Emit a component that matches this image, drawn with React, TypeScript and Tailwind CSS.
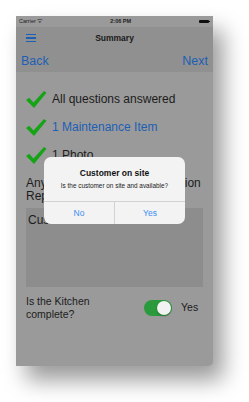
import React from "react";

function Check() {
  return (
    <svg width="22" height="19" viewBox="0 0 22 19" className="shrink-0">
      <path d="M1 10 L4.2 7.8 L8.5 12.5 L19 1 L21.5 2.8 L9 18 Z" fill="#16a316" />
    </svg>
  );
}

function CheckRow({ label, blue }: { label: string; blue?: boolean }) {
  return (
    <div className="flex h-[28px] items-center gap-[5px] pl-[9px]">
      <Check />
      <span className={`text-[12px] leading-none ${blue ? "text-[#1d5fb5]" : "text-[#1c1c1c]"}`}>{label}</span>
    </div>
  );
}

export default function App() {
  return (
    <div
      className="h-[402px] w-[249px] bg-white pl-[16px] pt-[16px]"
      style={{ fontFamily: '"Liberation Sans", Arial, sans-serif' }}
    >
      <div className="relative h-[350px] w-[197px] rounded-br-[5px] bg-[#9a9a9a] shadow-[10px_14px_22px_rgba(0,0,0,0.4)]">
        {/* Status bar */}
        <div className="flex h-[11px] items-center justify-between px-[3px] text-[5.5px] text-[#222]">
          <span>Carrier ᯤ</span>
          <span className="font-bold">2:06 PM</span>
          <span className="flex items-center">
            <span className="h-[3px] w-[10px] rounded-[1px] bg-[#111]" />
            <span className="h-[1.5px] w-[1px] bg-[#111]" />
          </span>
        </div>

        {/* Nav */}
        <div className="h-[45px] bg-[#909090]">
          <div className="relative flex h-[22px] items-center">
            <div className="ml-[10px] flex w-[10px] flex-col gap-[2px]">
              <span className="h-[1.5px] bg-[#1d5fb5]" />
              <span className="h-[1.5px] bg-[#1d5fb5]" />
              <span className="h-[1.5px] bg-[#1d5fb5]" />
            </div>
            <span className="flex-1 pr-[20px] text-center text-[8.5px] font-bold text-[#1a1a1a]">Summary</span>
          </div>
          <div className="flex h-[23px] items-center justify-between px-[5px] pt-[1px] text-[12.5px] text-[#1d5fb5]">
            <span>Back</span>
            <span>Next</span>
          </div>
        </div>

        {/* Content */}
        <div className="pt-[13px]">
          <CheckRow label="All questions answered" />
          <CheckRow label="1 Maintenance Item" blue />
          <CheckRow label="1 Photo" />
          <p className="mt-[8px] px-[10px] text-[12px] leading-[13px] text-[#1c1c1c]">
            Any comments for the Inspection Report?
          </p>
          <div className="mx-[10px] mt-[5px] h-[79px] bg-[#8d8d8d] px-[2px] pt-[3px] text-[12px] text-[#1c1c1c]">
            Customer comments
          </div>
          <div className="mt-[8px] flex items-center px-[10px]">
            <p className="w-[118px] text-[10.5px] leading-[13px] text-[#1c1c1c]">
              Is the Kitchen
              <br />
              complete?
            </p>
            <div className="flex h-[16px] w-[28px] items-center justify-end rounded-full bg-[#2b9a3c] pr-[1px]">
              <span className="h-[14px] w-[14px] rounded-full bg-[#f2f2f2] shadow-[0_1px_2px_rgba(0,0,0,0.3)]" />
            </div>
            <span className="ml-[9px] text-[10.5px] text-[#1c1c1c]">Yes</span>
          </div>
        </div>

        {/* Alert */}
        <div className="absolute left-[28px] top-[141px] flex h-[67px] w-[141px] flex-col overflow-hidden rounded-[7px] bg-[#f3f3f3]">
          <div className="flex h-[45px] flex-col items-center border-b border-[#d2d2d2] pt-[11px]">
            <span className="text-[8.5px] font-bold leading-[10px] text-[#111]">Customer on site</span>
            <span className="mt-[4px] text-[6.4px] leading-[8px] text-[#222]">Is the customer on site and available?</span>
          </div>
          <div className="flex flex-1 text-[8.5px] text-[#3a8ef3]">
            <span className="flex flex-1 items-center justify-center border-r border-[#d2d2d2]">No</span>
            <span className="flex flex-1 items-center justify-center">Yes</span>
          </div>
        </div>
      </div>
    </div>
  );
}
